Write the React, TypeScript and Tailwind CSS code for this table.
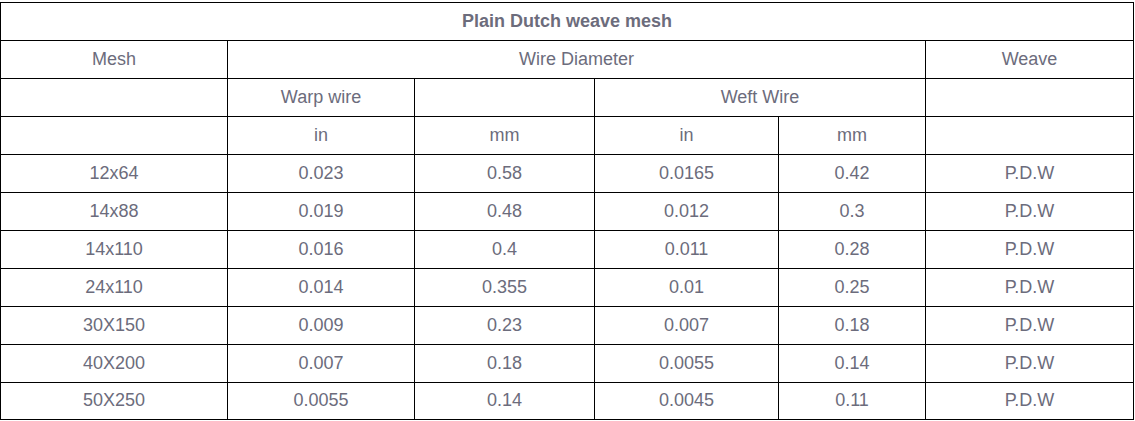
const rows = [
  ["12x64", "0.023", "0.58", "0.0165", "0.42", "P.D.W"],
  ["14x88", "0.019", "0.48", "0.012", "0.3", "P.D.W"],
  ["14x110", "0.016", "0.4", "0.011", "0.28", "P.D.W"],
  ["24x110", "0.014", "0.355", "0.01", "0.25", "P.D.W"],
  ["30X150", "0.009", "0.23", "0.007", "0.18", "P.D.W"],
  ["40X200", "0.007", "0.18", "0.0055", "0.14", "P.D.W"],
  ["50X250", "0.0055", "0.14", "0.0045", "0.11", "P.D.W"],
];

const cell = "border border-black text-center align-middle px-0 pt-0 pb-[2px]";

export default function App() {
  return (
    <div className="bg-white pt-[2px] font-['Liberation_Sans',Arial,sans-serif] text-[18px] leading-[20px] text-[#6c6c7c]">
      <table className="w-[1133px] table-fixed border-collapse">
        <colgroup>
          <col className="w-[227px]" />
          <col className="w-[187px]" />
          <col className="w-[180px]" />
          <col className="w-[184px]" />
          <col className="w-[147px]" />
          <col className="w-[208px]" />
        </colgroup>
        <tbody>
          <tr className="h-[38px]">
            <td colSpan={6} className={`${cell} font-bold`}>
              Plain Dutch weave mesh
            </td>
          </tr>
          <tr className="h-[38px]">
            <td className={cell}>Mesh</td>
            <td colSpan={4} className={cell}>Wire Diameter</td>
            <td className={cell}>Weave</td>
          </tr>
          <tr className="h-[38px]">
            <td className={cell}></td>
            <td className={cell}>Warp wire</td>
            <td className={cell}></td>
            <td colSpan={2} className={cell}>Weft Wire</td>
            <td className={cell}></td>
          </tr>
          <tr className="h-[38px]">
            <td className={cell}></td>
            <td className={cell}>in</td>
            <td className={cell}>mm</td>
            <td className={cell}>in</td>
            <td className={cell}>mm</td>
            <td className={cell}></td>
          </tr>
          {rows.map((r, idx) => (
            <tr key={r[0]} className={idx === rows.length - 1 ? "h-[37px]" : "h-[38px]"}>
              {r.map((v, i) => (
                <td key={i} className={cell}>{v}</td>
              ))}
            </tr>
          ))}
        </tbody>
      </table>
    </div>
  );
}
